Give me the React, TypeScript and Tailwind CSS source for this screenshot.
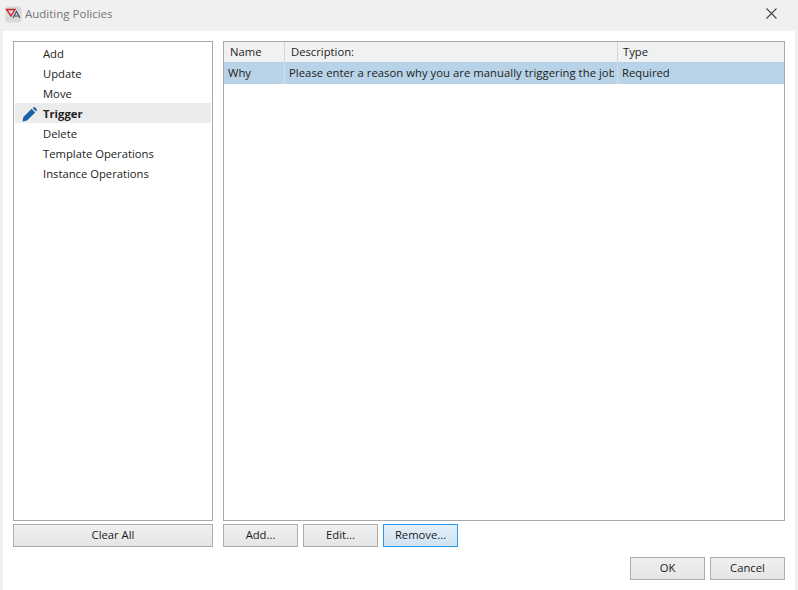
import React from 'react';

const font = { fontFamily: '"Open Sans", "Noto Sans", sans-serif' };

const policies = ['Add', 'Update', 'Move', 'Trigger', 'Delete', 'Template Operations', 'Instance Operations'];

const AppIcon = () => (
  <svg width="17" height="17" viewBox="0 0 17 17">
    <rect x="0.5" y="0.5" width="16" height="16" rx="3" fill="#d9d9d9" />
    <path d="M1.5 3.5 L10 3.5 L6 10 Z" fill="none" stroke="#d2232a" strokeWidth="1.4" />
    <path d="M8 12 L11.5 5.5 L15 12 M9.5 10 L13.5 10" fill="none" stroke="#35506e" strokeWidth="1.1" />
  </svg>
);

const PencilIcon = () => (
  <svg width="15" height="15" viewBox="0 0 15 15">
    <path d="M0.5 14.5 L1.4 10 L9.6 1.8 L13.2 5.4 L5 13.6 Z" fill="#1b5fa8" />
    <path d="M10.6 0.9 L11.6 0.2 Q12.3 -0.2 13 0.4 L14.6 2 Q15.2 2.7 14.7 3.4 L14 4.5 Z" fill="#1b5fa8" />
  </svg>
);

const Button = ({ label, className = '' }: { label: string; className?: string }) => (
  <button
    className={`h-[23px] border border-[#adadad] bg-gradient-to-b from-[#f0f0f0] to-[#e5e5e5] text-[11.25px] text-[#1a1a1a] ${className}`}
  >
    {label}
  </button>
);

export default function App() {
  return (
    <div className="w-[798px] h-[590px] flex flex-col bg-[#f0f0f0] overflow-hidden text-[11.25px]" style={font}>
      {/* title bar */}
      <div className="h-[31px] shrink-0 flex items-center pl-[5px] pr-[21px] pb-[3px]">
        <AppIcon />
        <span className="ml-[3px] text-[#767676] text-[11.5px]">Auditing Policies</span>
        <svg className="ml-auto mb-[2px]" width="11" height="11" viewBox="0 0 11 11">
          <path d="M0.5 0.5 L10.5 10.5 M10.5 0.5 L0.5 10.5" stroke="#444" strokeWidth="1.1" />
        </svg>
      </div>

      {/* body */}
      <div className="flex-1 mx-[3px] bg-white flex flex-col p-[10px]">
        <div className="flex gap-[10px]">
          {/* left column */}
          <div className="w-[200px] flex flex-col gap-[3px]">
            <div className="h-[480px] border border-[#a9a9a9] pt-[1px] px-px">
              {policies.map((p) => (
                <div
                  key={p}
                  className={`h-[20px] pt-[2px] flex items-center text-[#222] ${p === 'Trigger' ? 'bg-[#ececec] font-bold' : ''}`}
                >
                  <span className="w-[28px] shrink-0 flex justify-end pr-[6px]">{p === 'Trigger' && <PencilIcon />}</span>
                  <span>{p}</span>
                </div>
              ))}
            </div>
            <Button label="Clear All" className="w-full" />
          </div>

          {/* right column */}
          <div className="w-[562px] flex flex-col gap-[3px]">
            <div className="h-[480px] border border-[#a9a9a9]">
              <div className="h-[20px] flex bg-[#f1f1f1] text-[#222]">
                <div className="w-[61px] border-r border-[#d5d5d5] pl-[6px] flex items-center">Name</div>
                <div className="w-[333px] border-r border-[#d5d5d5] pl-[6px] flex items-center">Description:</div>
                <div className="flex-1 pl-[5px] flex items-center">Type</div>
              </div>
              <div className="h-[22px] flex bg-[#b8d2e7] text-[#222]">
                <div className="w-[61px] border-r border-[#d0e0ee] pl-[4px] flex items-center">Why</div>
                <div className="w-[333px] border-r border-[#d0e0ee] pl-[4px] pr-[3px] flex items-center">
                  <span className="block w-full overflow-hidden whitespace-nowrap tracking-[0.05px]">
                    Please enter a reason why you are manually triggering the job
                  </span>
                </div>
                <div className="flex-1 pl-[4px] flex items-center">Required</div>
              </div>
            </div>
            <div className="flex gap-[5px]">
              <Button label="Add..." className="w-[75px]" />
              <Button label="Edit..." className="w-[75px]" />
              <button className="w-[75px] h-[23px] border border-[#2b9bf0] bg-gradient-to-b from-[#e3eff8] to-[#cfe3f3] text-[11.25px] text-[#1a1a1a]">
                Remove...
              </button>
            </div>
          </div>
        </div>

        <div className="flex justify-end gap-[5px] mt-[10px]">
          <Button label="OK" className="w-[75px]" />
          <Button label="Cancel" className="w-[75px]" />
        </div>
      </div>
    </div>
  );
}
